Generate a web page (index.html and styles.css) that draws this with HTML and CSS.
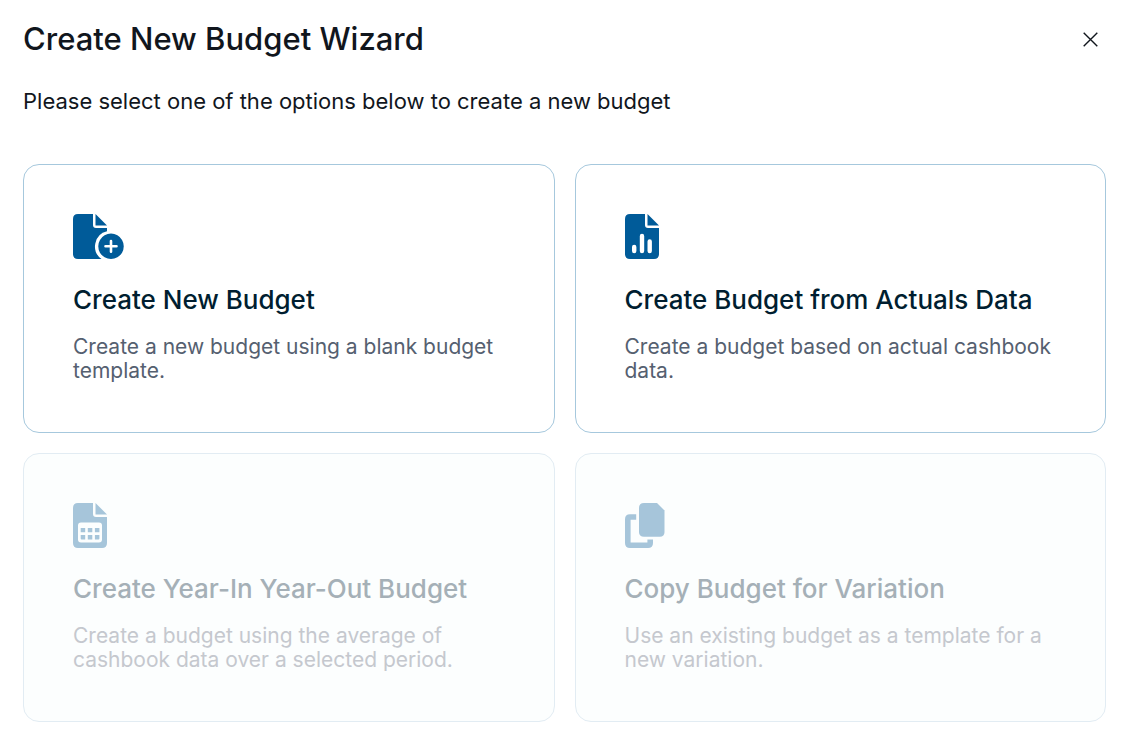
FILE: index.html
```html
<!DOCTYPE html>
<html lang="en">
<head>
<meta charset="utf-8">
<meta name="viewport" content="width=device-width, initial-scale=1">
<title>Create New Budget Wizard</title>
<link rel="stylesheet" href="styles.css">
</head>
<body>
<main class="wizard">
  <header class="wizard-header">
    <h1 class="wizard-title">Create New Budget Wizard</h1>
    <button class="close" type="button" aria-label="Close">
      <svg width="15" height="15" viewBox="0 0 15 15" fill="none" stroke="currentColor" stroke-width="1.4"><path d="M.7.7 14.3 14.3M14.3.7.7 14.3"/></svg>
    </button>
  </header>
  <p class="intro">Please select one of the options below to create a new budget</p>
  <div class="options">
    <button class="card" type="button">
      <svg class="icon" width="51" height="45" viewBox="0 0 51 45" fill="currentColor">
        <path d="M5 0H20V11Q20 14 23 14H34V17.3A15.5 15.5 0 0 0 28.5 45H5Q0 45 0 40V5Q0 0 5 0Z"/>
        <path d="M22.5 0 34 11.5H22.5Z"/>
        <path fill-rule="evenodd" d="M38 19.5a12.75 12.75 0 1 0 .01 0ZM36.7 27a1.3 1.3 0 0 1 2.6 0V31H43.5a1.3 1.3 0 0 1 0 2.6H39.3V37.8a1.3 1.3 0 0 1-2.6 0V33.6H32.5a1.3 1.3 0 0 1 0-2.6H36.7Z"/>
      </svg>
      <span class="card-title">Create New Budget</span>
      <span class="card-text">Create a new budget using a blank budget template.</span>
    </button>
    <button class="card" type="button">
      <svg class="icon" width="34" height="45" viewBox="0 0 34 45" fill="currentColor">
        <path fill-rule="evenodd" d="M5 0H20V11Q20 14 23 14H34V40Q34 45 29 45H5Q0 45 0 40V5Q0 0 5 0ZM7 33V37a2.2 2.2 0 0 0 4.4 0V33a2.2 2.2 0 0 0-4.4 0ZM14.8 22V37a2.2 2.2 0 0 0 4.4 0V22a2.2 2.2 0 0 0-4.4 0ZM22.5 27.5V37a2.2 2.2 0 0 0 4.4 0V27.5a2.2 2.2 0 0 0-4.4 0Z"/>
        <path d="M22.5 0 34 11.5H22.5Z"/>
      </svg>
      <span class="card-title">Create Budget from Actuals Data</span>
      <span class="card-text">Create a budget based on actual cashbook data.</span>
    </button>
    <button class="card" type="button" disabled>
      <svg class="icon" width="34" height="45" viewBox="0 0 34 45" fill="currentColor">
        <path fill-rule="evenodd" d="M5 0H20V11Q20 14 23 14H34V40Q34 45 29 45H5Q0 45 0 40V5Q0 0 5 0ZM8 19.5Q5 19.5 5 22.5V36.5Q5 39.5 8 39.5H26Q29 39.5 29 36.5V22.5Q29 19.5 26 19.5Z"/>
        <path d="M22.5 0 34 11.5H22.5Z"/>
        <path d="M7.7 25h4.5v4.2H7.7zM14.8 25h4.5v4.2h-4.5zM21.9 25h4.5v4.2h-4.5zM7.7 32h4.5v4.5H8.7a1 1 0 0 1-1-1zM14.8 32h4.5v4.5h-4.5zM21.9 32h4.5v3.5a1 1 0 0 1-1 1h-3.5z"/>
      </svg>
      <span class="card-title">Create Year-In Year-Out Budget</span>
      <span class="card-text">Create a budget using the average of cashbook data over a selected period.</span>
    </button>
    <button class="card" type="button" disabled>
      <svg class="icon" width="40" height="45" viewBox="0 0 40 45" fill="currentColor">
        <path d="M19 0H32L39.5 7.5V29Q39.5 33.7 34.8 33.7H19Q14 33.7 14 29V5Q14 0 19 0Z"/>
        <path d="M11.2 11.2V16.8H5.6V39.4H22.4V36.5H28V40Q28 45 23 45H5Q0 45 0 40V16.2Q0 11.2 5 11.2Z"/>
      </svg>
      <span class="card-title">Copy Budget for Variation</span>
      <span class="card-text">Use an existing budget as a template for a new variation.</span>
    </button>
  </div>
</main>
</body>
</html>
```
FILE: styles.css
```css
* {
  box-sizing: border-box;
}

body {
  margin: 0;
  background: #fff;
  color: #11161d;
  font-family: Inter, "Liberation Sans", sans-serif;
}

.wizard {
  padding: 19px 21px 16px 23px;
}

.wizard-header {
  display: flex;
  align-items: center;
  justify-content: space-between;
}

.wizard-title {
  margin: 0;
  font-size: 31px;
  line-height: 40px;
  font-weight: 500;
}

.close {
  display: flex;
  padding: 8px;
  border: 0;
  background: none;
  color: #11161d;
  cursor: pointer;
}

.intro {
  margin: 28px 0 49px;
  font-size: 22px;
  line-height: 28px;
}

.options {
  display: grid;
  grid-template-columns: repeat(2, minmax(0, 1fr));
  gap: 20px;
}

.card {
  display: flex;
  flex-direction: column;
  align-items: flex-start;
  padding: 49px;
  border: 1px solid #a6c8dd;
  border-radius: 16px;
  background: #fff;
  color: #001e30;
  font-family: inherit;
  text-align: left;
  cursor: pointer;
}

.icon {
  color: #005b99;
}

.card-title {
  margin-top: 26px;
  font-size: 26px;
  line-height: 30px;
  font-weight: 500;
}

.card-text {
  margin-top: 20px;
  color: #556070;
  font-size: 21px;
  line-height: 24px;
}

.card:disabled {
  border-color: #e2ecf3;
  background: #fcfefe;
  cursor: default;
}

.card:disabled .icon {
  color: #a6c5da;
}

.card:disabled .card-title {
  color: #a5b0b7;
}

.card:disabled .card-text {
  color: #c5c8ce;
}
```
